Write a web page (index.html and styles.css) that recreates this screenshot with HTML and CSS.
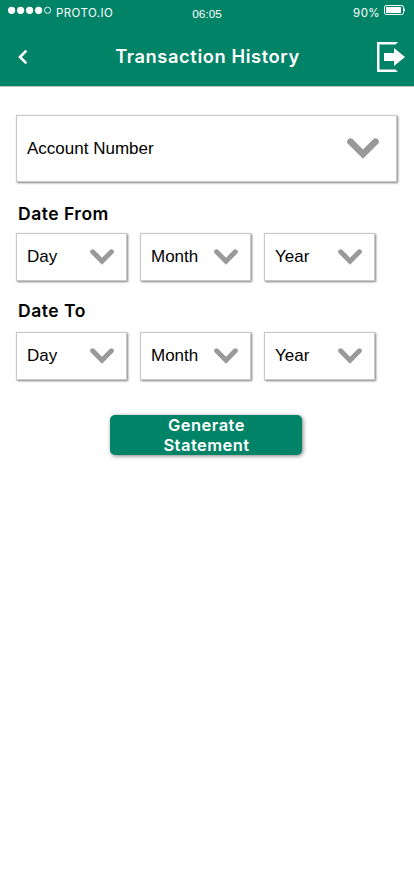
FILE: index.html
```html
<!DOCTYPE html>
<html lang="en">
<head>
<meta charset="utf-8">
<title>Transaction History</title>
<link rel="stylesheet" href="styles.css">
</head>
<body>
<header class="top">
  <div class="status">
    <div class="carrier">
      <svg width="44" height="8" viewBox="0 0 44 8"><g fill="#fff"><circle cx="3.6" cy="4.3" r="3.6"/><circle cx="12.6" cy="4.3" r="3.6"/><circle cx="21.6" cy="4.3" r="3.6"/><circle cx="30.6" cy="4.3" r="3.6"/></g><circle cx="39.6" cy="4.3" r="3.1" fill="none" stroke="#fff" stroke-width=".9"/></svg>
      <span class="carrier-name">PROTO.IO</span>
    </div>
    <span class="clock">06:05</span>
    <div class="power">
      <span class="percent">90%</span>
      <svg width="21" height="10" viewBox="0 0 21 10"><rect x=".5" y=".5" width="19" height="9" rx="1.7" fill="none" stroke="#fff"/><rect x="2" y="2" width="15" height="6" fill="#fff"/><path d="M20 3.3q1 .3 1 1.7t-1 1.7z" fill="#fff"/></svg>
    </div>
  </div>
  <nav class="bar">
    <svg class="back" width="10" height="16" viewBox="0 0 10 16"><path d="M8.4 1.600 2 8l6.400 6.400" fill="none" stroke="#fff" stroke-width="2.700"/></svg>
    <h1 class="title">Transaction History</h1>
    <svg class="logout" width="29" height="30" viewBox="0 0 29 30"><path fill="#fff" d="M0 0H21L18.500 2.500H2.500V27.500H18.500L21 30H0zM7 11H17V6L28 15 17 24V19H7z"/></svg>
  </nav>
</header>
<main class="form">
  <div class="select account"><span>Account Number</span><svg class="chevron" viewBox="0 0 32 21"><path d="M3.500 3.700 16 16.200 28.500 3.700"/></svg></div>
  <h2 class="label from">Date From</h2>
  <div class="row">
    <div class="select"><span>Day</span><svg class="chevron" viewBox="0 0 32 21"><path d="M3.500 3.700 16 16.200 28.500 3.700"/></svg></div>
    <div class="select"><span>Month</span><svg class="chevron" viewBox="0 0 32 21"><path d="M3.500 3.700 16 16.200 28.500 3.700"/></svg></div>
    <div class="select"><span>Year</span><svg class="chevron" viewBox="0 0 32 21"><path d="M3.500 3.700 16 16.200 28.500 3.700"/></svg></div>
  </div>
  <h2 class="label to">Date To</h2>
  <div class="row">
    <div class="select"><span>Day</span><svg class="chevron" viewBox="0 0 32 21"><path d="M3.500 3.700 16 16.200 28.500 3.700"/></svg></div>
    <div class="select"><span>Month</span><svg class="chevron" viewBox="0 0 32 21"><path d="M3.500 3.700 16 16.200 28.500 3.700"/></svg></div>
    <div class="select"><span>Year</span><svg class="chevron" viewBox="0 0 32 21"><path d="M3.500 3.700 16 16.200 28.500 3.700"/></svg></div>
  </div>
  <button class="generate">Generate<br>Statement</button>
</main>
</body>
</html>
```
FILE: styles.css
```css
* { box-sizing: border-box; }
body {
  margin: 0;
  min-height: 896px;
  background: #fff;
  color: #000;
  font-family: Inter, sans-serif;
}
svg { display: block; flex: none; }
.top {
  height: 87px;
  background: #008367;
  border-bottom: 1px solid #c0c0c0;
  color: #fff;
}
.status {
  display: grid;
  grid-template-columns: 1fr auto 1fr;
  height: 27px;
  padding: 0 9px 0 8px;
}
.carrier { display: flex; padding-top: 6px; }
.carrier-name {
  margin-left: 4px;
  font-size: 11.5px;
  line-height: 14px;
  letter-spacing: .43px;
}
.clock {
  padding: 7px 0 0 1px;
  font: 11.8px/14px "Liberation Sans", sans-serif;
}
.power { display: flex; justify-content: flex-end; padding-top: 5px; }
.percent {
  padding-top: 1px;
  margin-right: 4px;
  font-size: 11.5px;
  line-height: 14px;
  letter-spacing: .4px;
}
.bar {
  display: grid;
  grid-template-columns: 29px 1fr 29px;
  align-items: center;
  height: 59px;
  padding: 1px 8px 0;
}
.back { margin-left: 10px; }
.title {
  margin: 0 0 2px;
  padding-left: 1px;
  text-align: center;
  font-size: 18.300px;
  font-weight: 600;
  line-height: 24px;
  letter-spacing: .6px;
}
.form { padding: 28px 16px 0; }
.select {
  display: flex;
  align-items: center;
  justify-content: space-between;
  width: 111px;
  height: 48px;
  padding: 0 12px 0 10px;
  border: 1px solid #c8c8c8;
  box-shadow: 1px 1px 2px rgba(0, 0, 0, .5);
  font: 17px/20px "Liberation Sans", sans-serif;
}
.account { width: 381px; height: 67px; padding-right: 17.500px; }
.chevron { width: 24px; }
.account .chevron { width: 32px; }
.chevron path {
  fill: none;
  stroke: #999;
  stroke-width: 6.600;
  stroke-linecap: round;
}
.row { display: flex; gap: 13px; }
.label {
  margin: 0 0 0 2px;
  font-size: 17.500px;
  font-weight: 600;
  line-height: 22px;
  letter-spacing: .5px;
}
.from { padding: 21px 0 8px; }
.to { padding: 19px 0 10px; }
.generate {
  display: block;
  width: 192px;
  height: 40px;
  margin: 35px 0 0 94px;
  padding: 0 0 0 1px;
  border: 0;
  border-radius: 5px;
  background: #008367;
  box-shadow: 1px 1px 4px rgba(0, 0, 0, .5);
  color: #fff;
  font: 600 16.500px/20px Inter, sans-serif;
  letter-spacing: .45px;
}
```
